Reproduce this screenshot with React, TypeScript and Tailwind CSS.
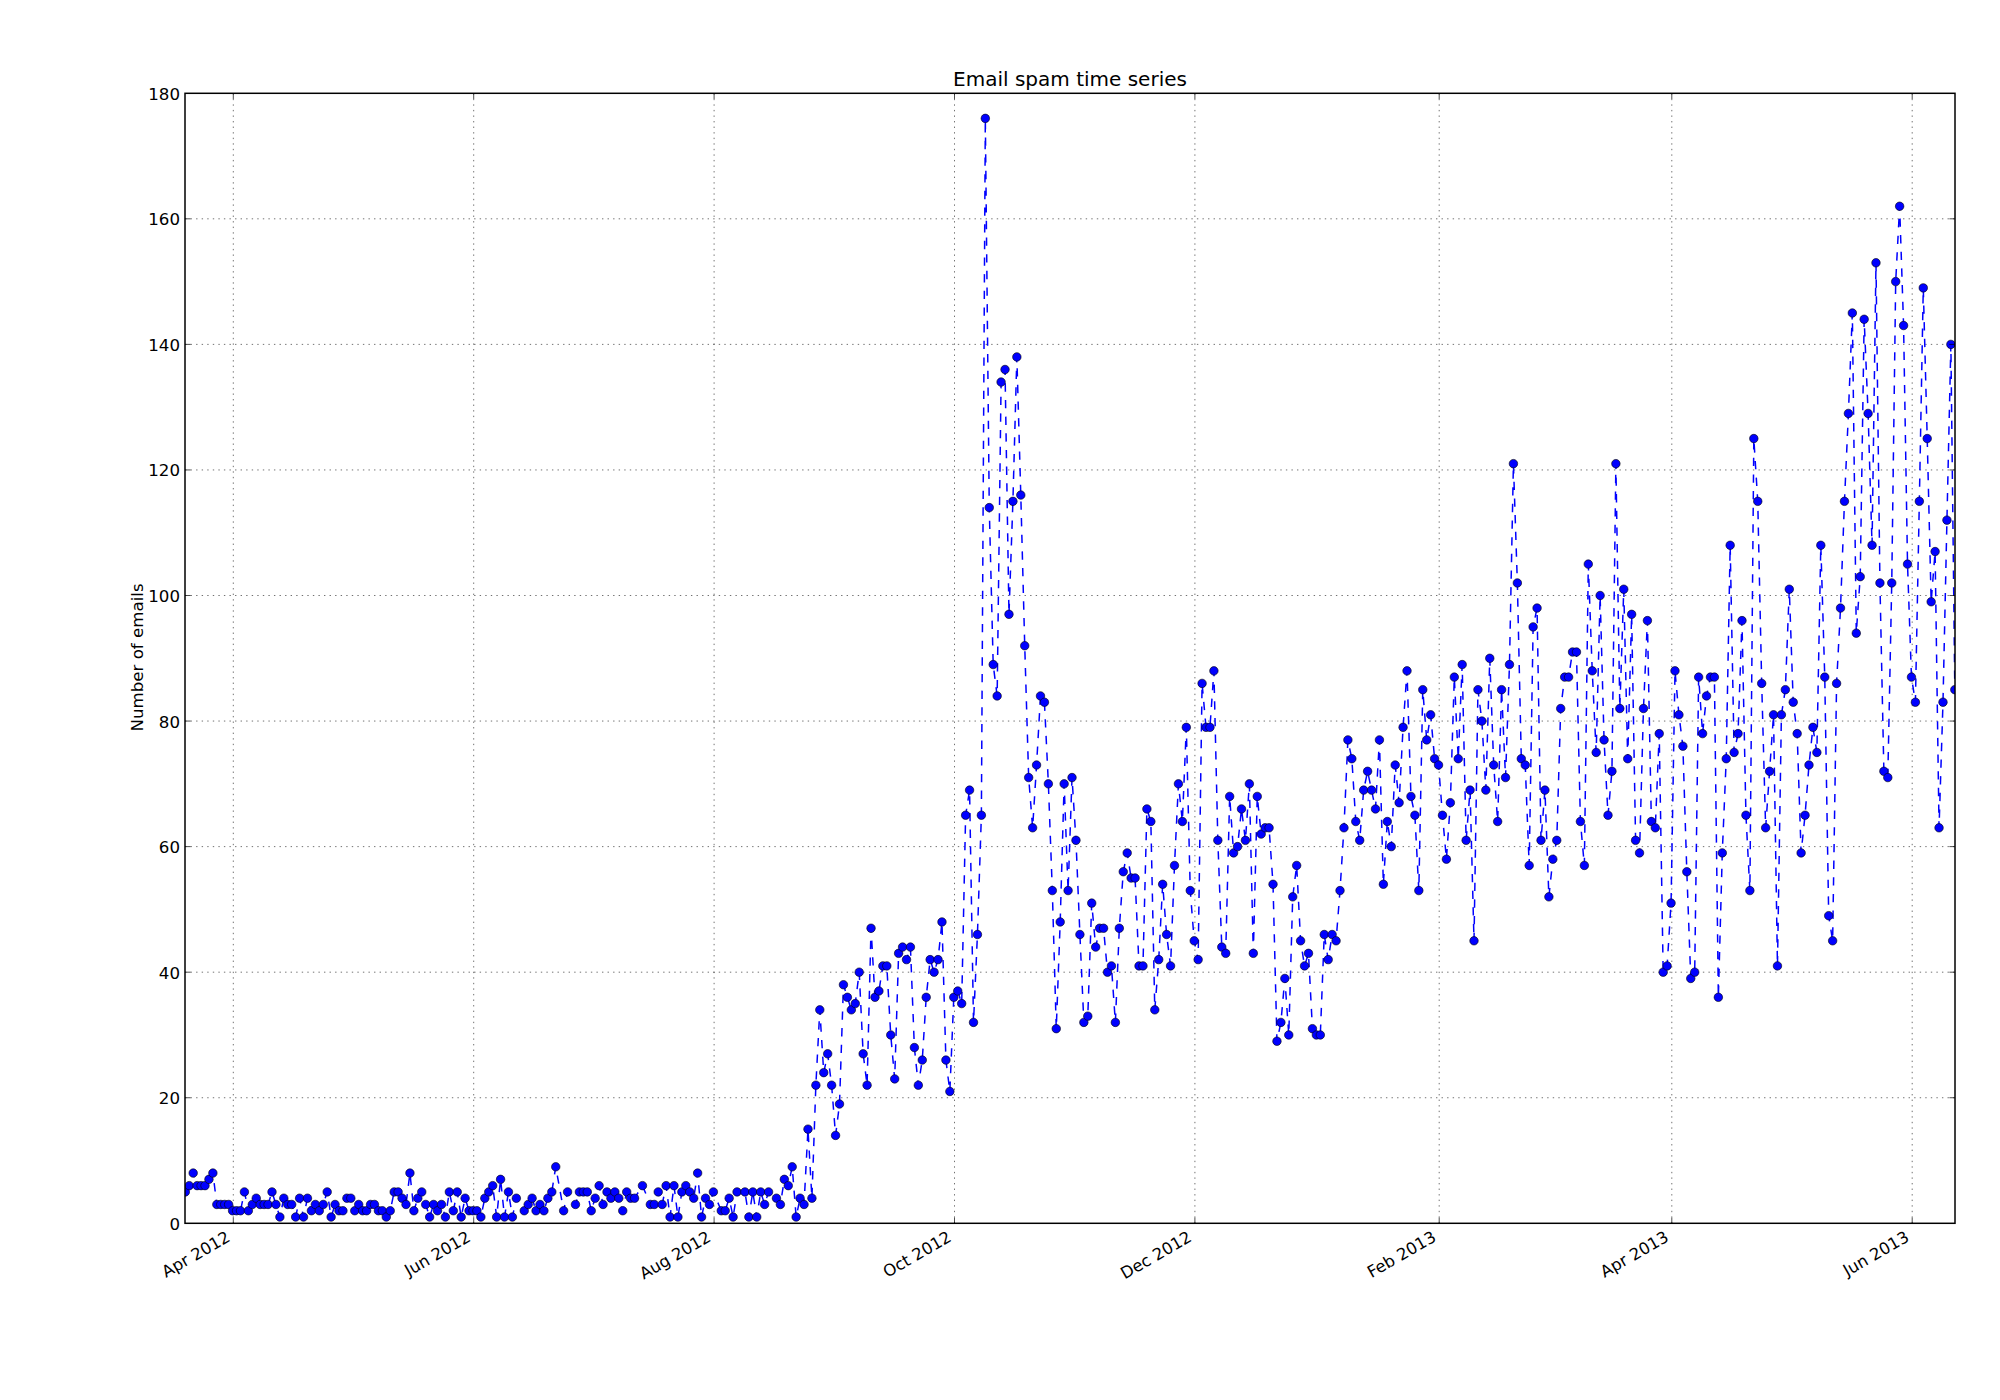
const X = (i: number) => 185.3 + 3.941 * i;
const Y = (v: number) => 1223.3 - v * 6.278;
const n = -1;
const data: number[] = [
  5,6,8,6,6,6,7,8,3,3,3,3,2,2,2,5,2,3,4,3,3,3,5,3,1,4,3,3,1,4,1,4,2,3,2,3,5,1,3,2,
  2,4,4,2,3,2,2,3,3,2,2,1,2,5,5,4,3,8,2,4,5,3,1,3,2,3,1,5,2,5,1,4,2,2,2,1,4,5,6,1,
  7,1,5,1,4,n,2,3,4,2,3,2,4,5,9,n,2,5,n,3,5,5,5,2,4,6,3,5,4,5,4,2,5,4,4,n,6,n,3,3,
  5,3,6,1,6,1,5,6,5,4,8,1,4,3,5,n,2,2,4,1,5,n,5,1,5,1,5,3,5,n,4,3,7,6,9,1,4,3,15,4,
  22,34,24,27,22,14,19,38,36,34,35,40,27,22,47,36,37,41,41,30,23,43,44,42,44,28,22,26,36,42,40,42,48,26,21,36,37,35,65,69,
  32,46,65,176,114,89,84,134,136,97,115,138,116,92,71,63,73,84,83,70,53,31,48,70,53,71,61,46,32,33,51,44,47,47,40,41,32,47,56,59,
  55,55,41,41,66,64,34,42,54,46,41,57,70,64,79,53,45,42,86,79,79,88,61,44,43,68,59,60,66,61,70,43,68,62,63,63,54,29,32,39,
  30,52,57,45,41,43,31,30,30,46,42,46,45,53,63,77,74,64,61,69,72,69,66,77,54,64,60,73,67,79,88,68,65,53,85,77,81,74,73,65,
  58,67,87,74,89,61,69,45,85,80,69,90,73,64,85,71,89,121,102,74,73,57,95,98,61,69,52,58,61,82,87,87,91,91,64,57,105,88,75,100,
  77,65,72,121,82,101,74,97,61,59,82,96,64,63,78,40,41,51,88,81,76,56,39,40,87,78,84,87,87,36,59,74,108,75,78,96,65,53,125,115,
  86,63,72,81,41,81,85,101,83,78,59,65,73,79,75,108,87,49,45,86,98,115,129,145,94,103,144,129,108,153,102,72,71,102,150,162,143,105,87,83,
  115,149,125,99,107,63,83,112,140,85,
];
const points = data.map((v, i) => ({ i, v })).filter((p) => p.v >= 0);
const line = points.map((p) => `${X(p.i).toFixed(2)},${Y(p.v).toFixed(2)}`).join(" ");
const xTicks: [number, string][] = [
  [233.3, "Apr 2012"], [473.7, "Jun 2012"], [714.1, "Aug 2012"], [954.5, "Oct 2012"],
  [1194.9, "Dec 2012"], [1439.2, "Feb 2013"], [1671.8, "Apr 2013"], [1912.2, "Jun 2013"],
];
const yTicks = [0, 20, 40, 60, 80, 100, 120, 140, 160, 180];
const L = 185, R = 1955, T = 93.3, B = 1223.3;

export default function App() {
  return (
    <div className="w-[2000px] h-[1400px] bg-white font-['DejaVu_Sans',sans-serif]">
      <svg width={2000} height={1400} viewBox="0 0 2000 1400" className="block">
        <defs>
          <clipPath id="plot"><rect x={L} y={T} width={R - L} height={B - T} /></clipPath>
        </defs>
        <g stroke="#000" strokeWidth={0.7} strokeOpacity={0.8} strokeDasharray="1.39 4.17" fill="none">
          {xTicks.map(([x]) => <line key={x} x1={x} x2={x} y1={B} y2={T} />)}
          {yTicks.slice(1, -1).map((v) => <line key={v} x1={L} x2={R} y1={Y(v)} y2={Y(v)} />)}
        </g>
        <g clipPath="url(#plot)">
          <polyline points={line} fill="none" stroke="#0000ff" strokeWidth={1.5} strokeDasharray="8.33 8.33" />
          {points.map((p) => (
            <circle key={p.i} cx={X(p.i)} cy={Y(p.v)} r={4.25} fill="#0000ff" stroke="#000" strokeWidth={0.6} />
          ))}
        </g>
        <g stroke="#000" strokeWidth={0.7}>
          {xTicks.map(([x]) => (
            <g key={x}>
              <line x1={x} x2={x} y1={B} y2={B - 5.6} />
              <line x1={x} x2={x} y1={T} y2={T + 5.6} />
            </g>
          ))}
          {yTicks.slice(1, -1).map((v) => (
            <g key={v}>
              <line x1={L} x2={L + 5.6} y1={Y(v)} y2={Y(v)} />
              <line x1={R} x2={R - 5.6} y1={Y(v)} y2={Y(v)} />
            </g>
          ))}
        </g>
        <rect x={L} y={T} width={R - L} height={B - T} fill="none" stroke="#000" strokeWidth={1.5} />
        <g fill="#000" fontSize={16.67}>
          {yTicks.map((v) => (
            <text key={v} x={L - 5} y={Y(v) + 6.5} textAnchor="end">{v}</text>
          ))}
        </g>
        <g fill="#000" fontSize={16.4}>
          {xTicks.map(([x, s]) => (
            <text key={s} x={x - 9.5} y={B + 7} textAnchor="end" dominantBaseline="hanging" transform={`rotate(-30 ${x - 9.5} ${B + 4})`}>{s}</text>
          ))}
        </g>
        <text x={0} y={0} fontSize={16.67} fill="#000" textAnchor="middle" transform="translate(143 657.5) rotate(-90)">Number of emails</text>
        <text x={1070} y={85.5} textAnchor="middle" fontSize={20} fill="#000">Email spam time series</text>
      </svg>
    </div>
  );
}
